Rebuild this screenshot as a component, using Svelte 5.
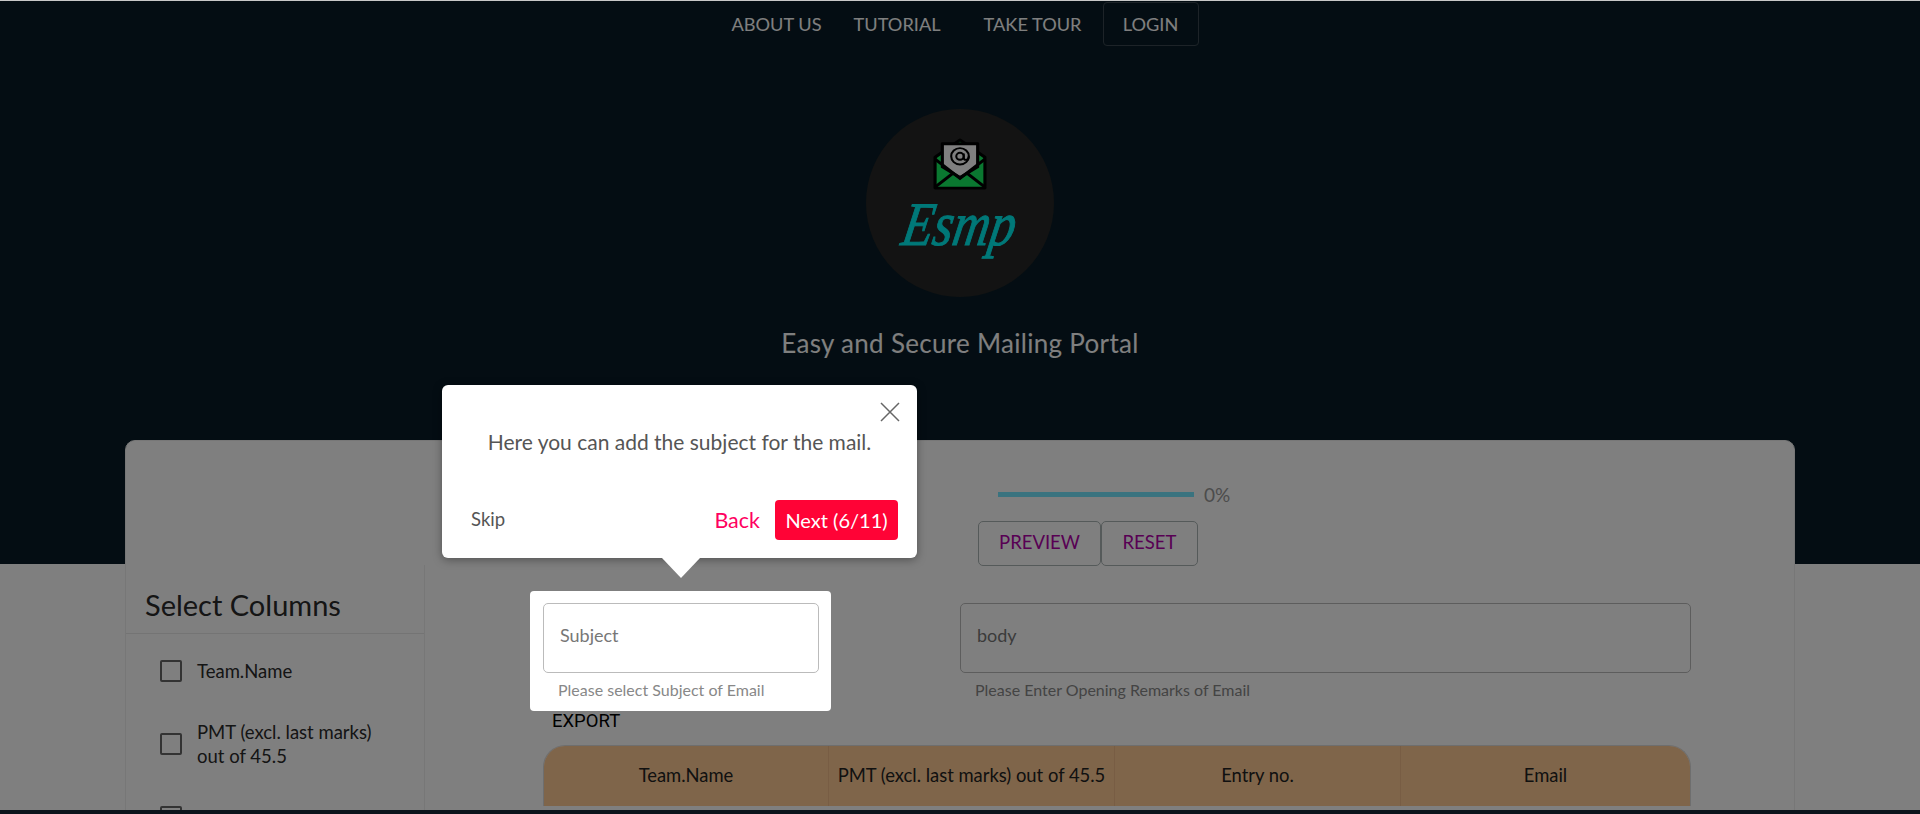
<script>
    const columns = ['Team.Name', 'PMT (excl. last marks) out of 45.5', 'Entry no.', 'Email']
    const sideColumns = ['Team.Name', 'PMT (excl. last marks) out of 45.5', 'Entry no.']
    let progress = 0
</script>

<div class="topline"></div>
<div class="stage">
    <header>
        <nav>
            <a href="#about" class="about">ABOUT US</a>
            <a href="#tutorial" class="tutorial">TUTORIAL</a>
            <a href="#tour" class="tour">TAKE TOUR</a>
            <a href="#login" class="login">LOGIN</a>
        </nav>
        <div class="logo">
            <svg width="54" height="52" viewBox="0 0 52 54" preserveAspectRatio="none">
                <path d="M2 52V20L26 2l24 18v32z" fill="#14f060" stroke="#000" stroke-width="3" stroke-linejoin="round" />
                <path d="M9 6h34v24L26 41 9 30z" fill="#fff" stroke="#000" stroke-width="3" stroke-linejoin="round" />
                <circle cx="26" cy="19" r="8.5" fill="none" stroke="#000" stroke-width="2" />
                <circle cx="26" cy="19" r="3.6" fill="none" stroke="#000" stroke-width="2" />
                <path d="M29.6 16v4.5q0 2.2 2 2.2 2.9 0 2.9-3.7" fill="none" stroke="#000" stroke-width="2" />
                <path d="M2 22l24 20 24-20M2 51l18-15M50 51 32 36" fill="none" stroke="#000" stroke-width="3" />
            </svg>
            <span class="wordmark">Esmp</span>
        </div>
        <p class="tagline">Easy and Secure Mailing Portal</p>
    </header>

    <div class="outside">
        <section class="card">
            <div class="actions">
                <div class="progress">
                    <div class="track"><div class="fill" style="width: {progress}%"></div></div>
                    <span>{progress}%</span>
                </div>
                <div class="btns">
                    <button>PREVIEW</button>
                    <button>RESET</button>
                </div>
            </div>
            <div class="columns">
                <aside>
                    <h2>Select Columns</h2>
                    <ul>
                        {#each sideColumns as col}
                            <li><span class="check"></span><span>{col}</span></li>
                        {/each}
                    </ul>
                </aside>
                <main>
                    <div class="fields">
                        <div class="highlight">
                            <div class="field subject">
                                <div class="input">Subject</div>
                                <small>Please select Subject of Email</small>
                            </div>
                            <div class="tip">
                                <svg class="close" width="20" height="20" viewBox="0 0 20 20">
                                    <path d="M1 1l18 18M19 1 1 19" stroke="#666" stroke-width="1.5" fill="none" />
                                </svg>
                                <p>Here you can add the subject for the mail.</p>
                                <div class="tipfoot">
                                    <span class="skip">Skip</span>
                                    <span class="back">Back</span>
                                    <span class="next">Next (6/11)</span>
                                </div>
                                <div class="arrow"></div>
                            </div>
                        </div>
                        <div class="field body">
                            <div class="input">body</div>
                            <small>Please Enter Opening Remarks of Email</small>
                        </div>
                    </div>
                    <div class="export">EXPORT</div>
                    <div class="table">
                        {#each columns as col}
                            <div class="th">{col}</div>
                        {/each}
                    </div>
                </main>
            </div>
        </section>
    </div>
</div>
<div class="bottomline"></div>

<style>
    :global(body) {
        margin: 0;
        background: #fff;
        font-family: Lato, "Open Sans", sans-serif;
    }

    .topline {
        height: 1px;
        background: #c8c8c8;
    }

    .stage {
        position: relative;
        height: 809px;
        overflow: hidden;
        background: #fff;
    }

    .bottomline {
        height: 4px;
        background: #0c151c;
    }

    header {
        height: 563px;
        background: #081b26;
        color: #fff;
        display: flex;
        flex-direction: column;
        align-items: center;
    }

    nav {
        height: 44px;
        margin-top: 1px;
        display: flex;
        align-items: center;
        font-size: 18.2px;
        margin-left: 10px;
    }

    nav a {
        color: #fff;
        text-decoration: none;
    }

    .about { margin-right: 32px; }
    .tutorial { margin-right: 43px; }
    .tour { margin-right: 21px; }

    .login {
        height: 42px;
        width: 94px;
        display: flex;
        align-items: center;
        justify-content: center;
        border: 1px solid #3a4650;
        border-radius: 4px;
    }

    .logo {
        margin-top: 63px;
        width: 188px;
        height: 188px;
        border-radius: 50%;
        background: #262626;
        display: flex;
        flex-direction: column;
        align-items: center;
        padding-top: 29px;
        box-sizing: border-box;
    }

    .wordmark {
        font-family: "Liberation Serif", serif;
        font-style: italic;
        font-size: 62px;
        line-height: 70px;
        margin-top: -1px;
        color: #00f0f0;
        -webkit-text-stroke: 1px #00f0f0;
        transform: skewX(-10deg) scaleX(0.82);
    }

    .tagline {
        margin: 30px 0 0;
        font-size: 26px;
        line-height: 32px;
        letter-spacing: 0.3px;
    }

    .outside {
        margin-top: -124px;
        padding: 0 125px;
    }

    .card {
        background: #fff;
        border: 1px solid #eee;
        border-radius: 10px;
        box-sizing: border-box;
        height: 500px;
        margin: 0;
    }

    .actions {
        height: 124px;
        padding-left: 852px;
        box-sizing: border-box;
        padding-top: 41px;
    }

    .progress {
        display: flex;
        align-items: center;
        margin-left: 20px;
        height: 24px;
        gap: 10px;
        color: #999;
        font-size: 19px;
    }

    .track {
        width: 196px;
        height: 5px;
        background: #74e6ff;
    }

    .fill {
        height: 100%;
        background: #09f;
    }

    .btns {
        display: flex;
        margin-top: 15px;
    }

    button {
        height: 45px;
        font: inherit;
        font-size: 18.5px;
        color: #b000a8;
        background: none;
        border: 1px solid #aab4b4;
        border-radius: 5px;
        padding: 0 0 3px;
        width: 123px;
    }

    button + button {
        width: 97px;
    }

    .columns {
        display: flex;
    }

    aside {
        width: 298px;
        flex: none;
        border-right: 1px solid #eee;
        height: 300px;
        color: #2a2a2a;
    }

    h2 {
        margin: 0;
        height: 69px;
        box-sizing: border-box;
        padding: 23px 0 0 19px;
        font-size: 29px;
        font-weight: 400;
        line-height: 34px;
        border-bottom: 1px solid #e8e8e8;
    }

    ul {
        list-style: none;
        margin: 0;
        padding: 12px 0 0 34px;
        font-size: 18.5px;
        line-height: 24px;
    }

    li {
        display: flex;
        align-items: center;
        gap: 15px;
        min-height: 50px;
        margin-bottom: 23px;
        width: 224px;
    }

    .check {
        flex: none;
        width: 18px;
        height: 18px;
        border: 2px solid #666;
        border-radius: 2px;
    }

    main {
        flex: 1;
        padding: 0 103px 0 118px;
    }

    .fields {
        display: flex;
        padding-top: 26px;
    }

    .highlight {
        position: relative;
        z-index: 10;
        background: #fff;
        border-radius: 4px;
        box-shadow: 0 0 0 3000px rgba(0, 0, 0, 0.5);
        width: 301px;
        height: 120px;
        flex: none;
        margin-left: -13px;
        padding: 12px 12px 0 13px;
        box-sizing: border-box;
    }

    .field small {
        display: block;
        margin: 8px 0 0 15px;
        font-size: 16px;
        line-height: 18px;
        color: #888;
    }

    .input {
        height: 70px;
        box-sizing: border-box;
        border: 1px solid #bbb;
        border-radius: 5px;
        padding: 0 16px 7px;
        display: flex;
        align-items: center;
        font-size: 18px;
        color: #777;
    }

    .body {
        flex: 1;
        margin-left: 129px;
        padding-top: 12px;
    }

    .tip {
        position: absolute;
        left: -88px;
        bottom: 153px;
        width: 475px;
        height: 173px;
        background: #fff;
        border-radius: 6px;
        box-shadow: 0 2px 10px rgba(0, 0, 0, 0.35);
        color: #555;
    }

    .close {
        position: absolute;
        top: 17px;
        right: 17px;
    }

    .tip p {
        margin: 0;
        padding-top: 43px;
        text-align: center;
        font-size: 21px;
        line-height: 28px;
    }

    .tipfoot {
        position: absolute;
        left: 29px;
        right: 19px;
        top: 115px;
        display: flex;
        align-items: center;
    }

    .skip {
        font-size: 18.5px;
        margin-right: auto;
        padding-bottom: 2px;
    }

    .back {
        color: #ff0060;
        font-size: 21.5px;
        margin-right: 15px;
    }

    .next {
        width: 123px;
        height: 40px;
        border-radius: 4px;
        background: #ff0336;
        color: #fff;
        font-size: 20px;
        display: flex;
        align-items: center;
        justify-content: center;
    }

    .arrow {
        position: absolute;
        left: 220px;
        top: 173px;
        width: 0;
        height: 0;
        border-left: 19px solid transparent;
        border-right: 19px solid transparent;
        border-top: 20px solid #fff;
    }

    .export {
        margin: -2px 0 0 9px;
        font-family: Roboto, sans-serif;
        font-size: 18.5px;
        line-height: 24px;
        color: #000;
    }

    .table {
        margin-top: 12px;
        display: grid;
        grid-template-columns: 285px 286px 286px 1fr;
        border: 1px solid #ddd;
        border-bottom: none;
        border-radius: 22px 22px 0 0;
        overflow: hidden;
    }

    .th {
        height: 60px;
        padding-bottom: 2px;
        background: #ffca94;
        color: #222;
        display: flex;
        align-items: center;
        justify-content: center;
        font-size: 18.4px;
        border-right: 1px solid #f0bb88;
        box-sizing: border-box;
    }

    .th:last-child {
        border-right: none;
    }
</style>
